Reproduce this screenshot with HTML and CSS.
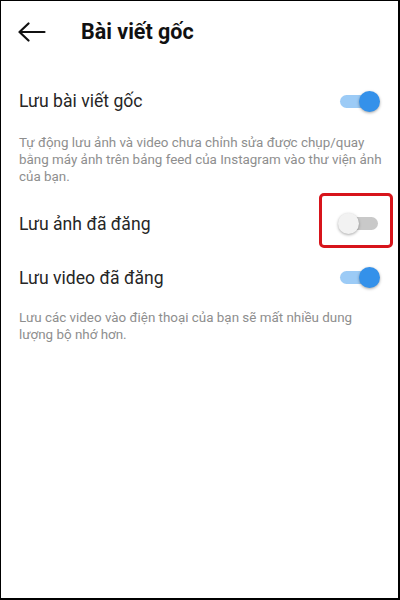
FILE: index.html
```html
<!DOCTYPE html>
<html lang="vi">
<head>
    <meta charset="UTF-8">
    <title>Bài viết gốc</title>
    <link rel="stylesheet" href="styles.css">
</head>
<body>
    <div class="screen">
        <div class="header">
            <svg class="back" width="28" height="20" viewBox="0 0 28 20">
                <path d="M1.5 10 H26.5 M10.5 1.5 L1.5 10 L10.5 18.5" fill="none" stroke="#111" stroke-width="2.2" stroke-linecap="round" stroke-linejoin="round"/>
            </svg>
            <h1>Bài viết gốc</h1>
        </div>

        <div class="setting">
            <span class="label">Lưu bài viết gốc</span>
            <div class="toggle on"><div class="knob"></div></div>
        </div>
        <p class="desc">Tự động lưu ảnh và video chưa chỉnh sửa được chụp/quay bằng máy ảnh trên bảng feed của Instagram vào thư viện ảnh của bạn.</p>

        <div class="setting">
            <span class="label">Lưu ảnh đã đăng</span>
            <div class="toggle marked"><div class="knob"></div></div>
        </div>

        <div class="setting">
            <span class="label">Lưu video đã đăng</span>
            <div class="toggle on"><div class="knob"></div></div>
        </div>
        <p class="desc tight">Lưu các video vào điện thoại của bạn sẽ mất nhiều dung lượng bộ nhớ hơn.</p>
    </div>
</body>
</html>
```

FILE: styles.css
```css
*, *::before, *::after {
    box-sizing: border-box;
}
body {
    margin: 0;
    font-family: Roboto, "Noto Sans", Arial, sans-serif;
    background: #fff;
}
.screen {
    width: 400px;
    height: 600px;
    border: 1px solid #000;
    border-right-width: 2px;
    border-bottom-width: 2px;
    background: #fff;
}
.header {
    height: 61px;
    display: flex;
    align-items: center;
    padding-left: 17px;
}
.back {
    display: block;
    margin-right: 35px;
}
h1 {
    margin: 0;
    font-size: 21.5px;
    font-weight: 700;
    color: #111;
}
.setting {
    height: 54px;
    display: flex;
    align-items: center;
    justify-content: space-between;
    padding: 0 20px 0 18px;
}
.header + .setting {
    margin-top: 12px;
}
.label {
    font-size: 17.6px;
    color: #262626;
}
.desc {
    margin: 7px 0 11px;
    padding: 0 12px 0 18px;
    font-size: 13.4px;
    line-height: 16.9px;
    color: #8e8e8e;
}
.desc.tight {
    margin-top: 5px;
}
.toggle {
    position: relative;
    width: 38px;
    height: 13px;
    border-radius: 7px;
    background: #c9c9c9;
}
.toggle .knob {
    position: absolute;
    top: -4px;
    left: -2px;
    width: 21px;
    height: 21px;
    border-radius: 50%;
    background: #f2f2f2;
    box-shadow: 0 1px 3px rgba(0, 0, 0, 0.35);
}
.toggle.on {
    background: #9ccbf6;
}
.toggle.on .knob {
    left: auto;
    right: -2px;
    background: #3491ea;
}
/* red highlight around the switch that is off */
.toggle.marked::after {
    content: "";
    position: absolute;
    left: -21px;
    top: -24px;
    width: 74px;
    height: 55px;
    border: 3px solid #d7141b;
    border-radius: 5px;
}
```
